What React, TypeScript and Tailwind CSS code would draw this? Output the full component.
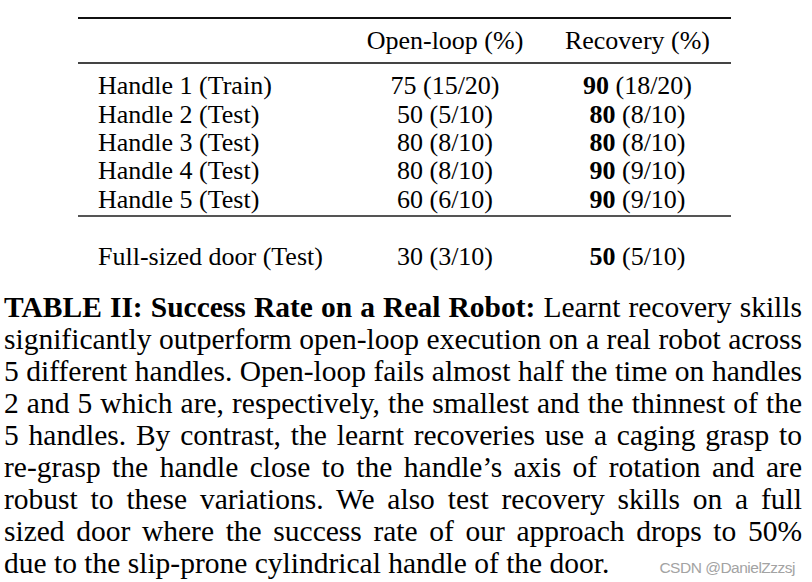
const rows = [
  { name: 'Handle 1 (Train)', open: '75 (15/20)', best: '90', rest: ' (18/20)' },
  { name: 'Handle 2 (Test)', open: '50 (5/10)', best: '80', rest: ' (8/10)' },
  { name: 'Handle 3 (Test)', open: '80 (8/10)', best: '80', rest: ' (8/10)' },
  { name: 'Handle 4 (Test)', open: '80 (8/10)', best: '90', rest: ' (9/10)' },
  { name: 'Handle 5 (Test)', open: '60 (6/10)', best: '90', rest: ' (9/10)' },
]

const captionLines = [
  'significantly outperform open-loop execution on a real robot across',
  '5 different handles. Open-loop fails almost half the time on handles',
  '2 and 5 which are, respectively, the smallest and the thinnest of the',
  '5 handles. By contrast, the learnt recoveries use a caging grasp to',
  're-grasp the handle close to the handle\u2019s axis of rotation and are',
  'robust to these variations. We also test recovery skills on a full',
  'sized door where the success rate of our approach drops to 50%',
]

function Row({
  name,
  open,
  best,
  rest,
}: {
  name: string
  open: string
  best: string
  rest: string
}) {
  return (
    <div className="grid grid-cols-[268px_198px_187px] leading-[28.4px]">
      <div className="pl-[20px]">{name}</div>
      <div className="text-center">{open}</div>
      <div className="text-center">
        <span className="font-bold">{best}</span>
        {rest}
      </div>
    </div>
  )
}

export default function App() {
  return (
    <div className="w-[812px] h-[582px] overflow-hidden bg-white text-black [font-family:'Liberation_Serif','Times_New_Roman',serif]">
      <div className="ml-[78px] w-[653px] pt-[17px] text-[26px]">
        <div className="h-[2px] bg-[#111]" />

        <div className="mt-[8px] grid grid-cols-[268px_198px_187px] leading-[28.2px]">
          <div />
          <div className="text-center">Open-loop (%)</div>
          <div className="text-center">Recovery (%)</div>
        </div>

        <div className="mt-[7px] h-[2px] bg-[#444]" />

        <div className="mt-[8px]">
          {rows.map((r) => (
            <Row key={r.name} {...r} />
          ))}
        </div>

        <div className="mt-[1px] h-[2px] bg-[#555]" />

        <div className="mt-[26px]">
          <Row name="Full-sized door (Test)" open="30 (3/10)" best="50" rest=" (5/10)" />
        </div>
      </div>

      <div className="ml-[4px] mt-[19px] w-[798px] text-[29.5px] leading-[32px]">
        <div className="text-justify [text-align-last:justify]">
          <span className="font-bold">TABLE II: Success Rate on a Real Robot:</span> Learnt
          recovery skills
        </div>
        {captionLines.map((line) => (
          <div key={line} className="text-justify [text-align-last:justify]">
            {line}
          </div>
        ))}
        <div className="flex items-baseline justify-between pr-[7px]">
          <span>due to the slip-prone cylindrical handle of the door.</span>
          <span className="[font-family:'Liberation_Sans',Arial,sans-serif] text-[15.5px] tracking-[-0.5px] text-[#a3a3a3]">
            CSDN @DanielZzzsj
          </span>
        </div>
      </div>
    </div>
  )
}
